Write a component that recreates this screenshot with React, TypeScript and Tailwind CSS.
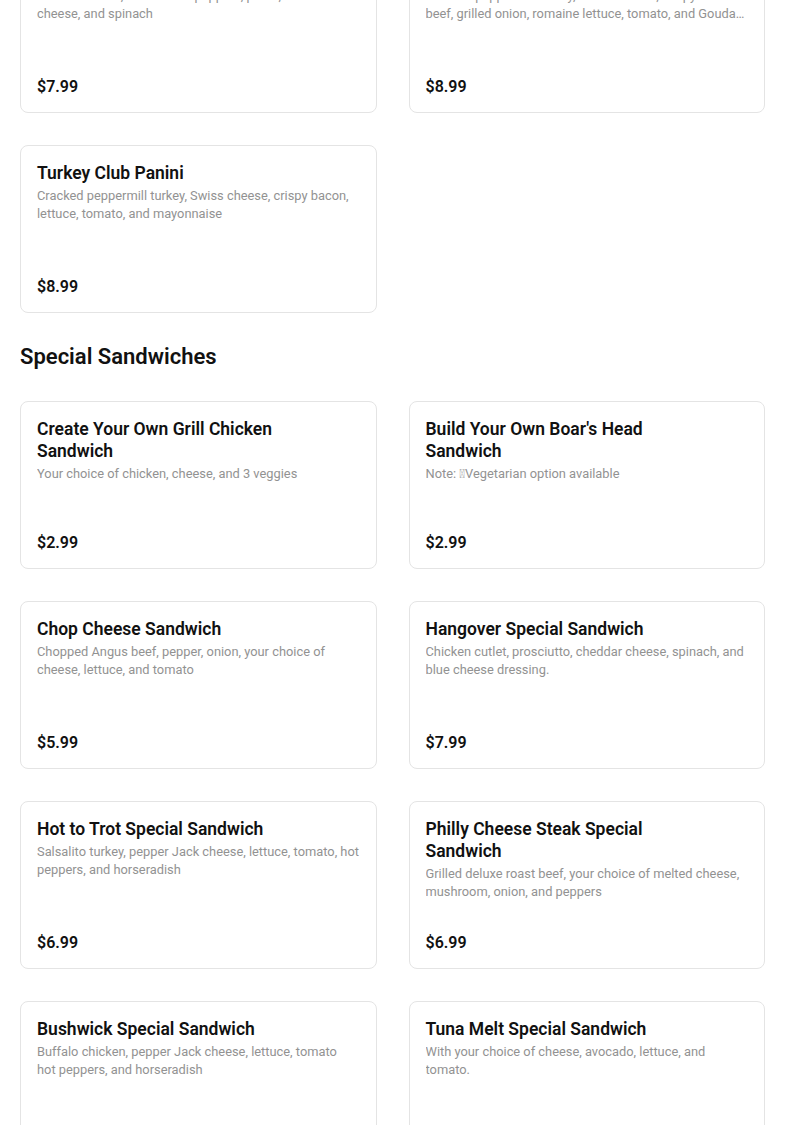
type Item = {
  name: string
  description: string
  price: string
}

const previousItems: Item[] = [
  {
    name: "Chicken Pesto Panini",
    description:
      "Grilled chicken, roasted red peppers, pesto, mozzarella cheese, and spinach",
    price: "$7.99",
  },
  {
    name: "Boar's Head Club Panini",
    description:
      "Cracked peppermill turkey, Swiss cheese, crispy roast beef, grilled onion, romaine lettuce, tomato, and Gouda cheese with chipotle mayo",
    price: "$8.99",
  },
  {
    name: "Turkey Club Panini",
    description:
      "Cracked peppermill turkey, Swiss cheese, crispy bacon, lettuce, tomato, and mayonnaise",
    price: "$8.99",
  },
]

const specialItems: Item[] = [
  {
    name: "Create Your Own Grill Chicken Sandwich",
    description: "Your choice of chicken, cheese, and 3 veggies",
    price: "$2.99",
  },
  {
    name: "Build Your Own Boar's Head Sandwich",
    description: "Note: \u{E000}Vegetarian option available",
    price: "$2.99",
  },
  {
    name: "Chop Cheese Sandwich",
    description:
      "Chopped Angus beef, pepper, onion, your choice of cheese, lettuce, and tomato",
    price: "$5.99",
  },
  {
    name: "Hangover Special Sandwich",
    description:
      "Chicken cutlet, prosciutto, cheddar cheese, spinach, and blue cheese dressing.",
    price: "$7.99",
  },
  {
    name: "Hot to Trot Special Sandwich",
    description:
      "Salsalito turkey, pepper Jack cheese, lettuce, tomato, hot peppers, and horseradish",
    price: "$6.99",
  },
  {
    name: "Philly Cheese Steak Special Sandwich",
    description:
      "Grilled deluxe roast beef, your choice of melted cheese, mushroom, onion, and peppers",
    price: "$6.99",
  },
  {
    name: "Bushwick Special Sandwich",
    description:
      "Buffalo chicken, pepper Jack cheese, lettuce, tomato hot\u00A0peppers, and horseradish",
    price: "$6.99",
  },
  {
    name: "Tuna Melt Special Sandwich",
    description: "With your choice of cheese, avocado, lettuce, and tomato.",
    price: "$7.99",
  },
]

function MenuCard({ item }: { item: Item }) {
  return (
    <div className="flex h-[168px] flex-col justify-between rounded-lg border border-[#e4e4e4] bg-white p-4">
      <div>
        <h3 className="pr-[64px] text-[17.5px] leading-[22px] font-semibold text-[#111]">
          {item.name}
        </h3>
        <p className="mt-[3px] line-clamp-2 text-[12.85px] leading-[18px] text-[#929292]">
          {item.description}
        </p>
      </div>
      <div className="text-[16px] leading-[18px] font-semibold text-[#111]">
        {item.price}
      </div>
    </div>
  )
}

export default function App() {
  return (
    <div
      className="min-h-screen overflow-hidden bg-white px-5"
      style={{ fontFamily: "Roboto, 'Liberation Sans', sans-serif" }}
    >
      <div className="-mt-[55px]">
        <div className="grid grid-cols-2 gap-8">
          {previousItems.map((item) => (
            <MenuCard item={item} key={item.name} />
          ))}
        </div>

        <h2 className="my-8 text-[22px] leading-6 font-semibold text-[#111]">
          Special Sandwiches
        </h2>

        <div className="grid grid-cols-2 gap-8 pb-8">
          {specialItems.map((item) => (
            <MenuCard item={item} key={item.name} />
          ))}
        </div>
      </div>
    </div>
  )
}
